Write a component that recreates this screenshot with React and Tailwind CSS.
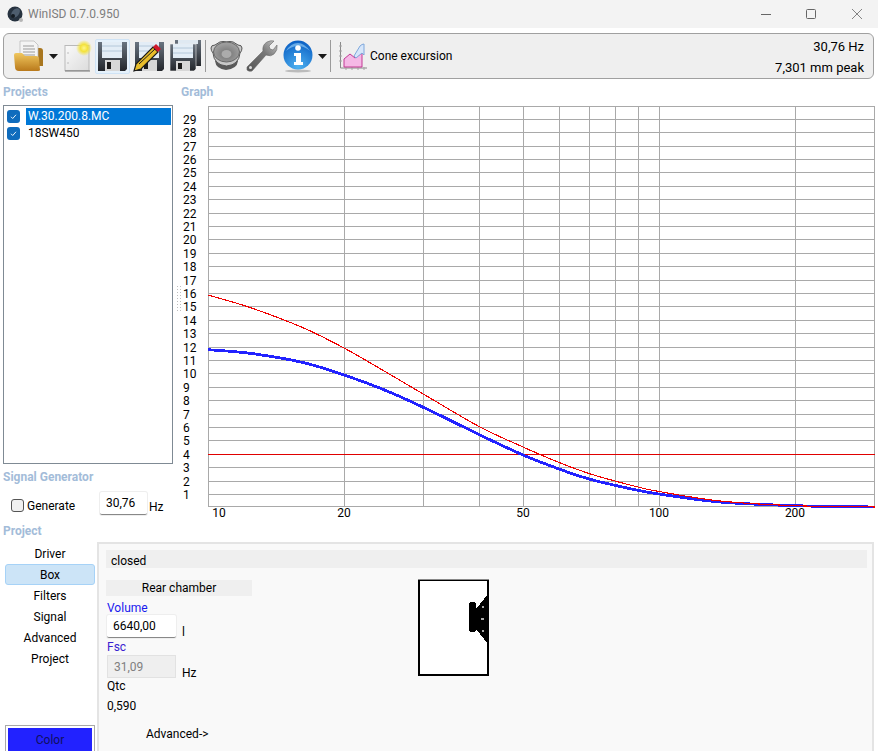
// App.jsx
import React from "react";

const gridX = [344, 423, 479, 523, 559, 589, 615, 638, 659, 795];
const ticksX = [
  { x: 219, label: "10" },
  { x: 344, label: "20" },
  { x: 523, label: "50" },
  { x: 659, label: "100" },
  { x: 795, label: "200" },
];
const values = Array.from({ length: 29 }, (_, i) => i + 1);
const rowY = (v) => Math.floor(506.8 - 13.4 * v) + 0.5;

const redPts = [[208, 294], [250, 306.5], [303, 326.7], [344, 347], [387, 371.7], [430, 397], [480, 426], [523, 446], [559, 461.5], [589, 472.5], [615, 480], [638, 486], [659, 490.5], [720, 500], [795, 504.7], [875, 506]];
const bluePts = [[208, 348.7], [250, 352.3], [303, 361.5], [344, 374], [387, 390], [430, 409.5], [480, 434], [523, 454], [559, 468], [589, 478], [615, 484.3], [638, 489.3], [659, 493], [720, 501], [795, 504.7], [875, 506]];

// catmull-rom through the read-off points
function curve(pts) {
  let d = `M${pts[0][0]} ${pts[0][1]}`;
  for (let i = 0; i < pts.length - 1; i++) {
    const p0 = pts[Math.max(i - 1, 0)];
    const p1 = pts[i];
    const p2 = pts[i + 1];
    const p3 = pts[Math.min(i + 2, pts.length - 1)];
    const c1x = p1[0] + (p2[0] - p0[0]) / 6;
    const c1y = p1[1] + (p2[1] - p0[1]) / 6;
    const c2x = p2[0] - (p3[0] - p1[0]) / 6;
    const c2y = p2[1] - (p3[1] - p1[1]) / 6;
    d += ` C${c1x} ${c1y} ${c2x} ${c2y} ${p2[0]} ${p2[1]}`;
  }
  return d;
}

function Graph() {
  return (
    <svg width="697" height="420" viewBox="181 100 697 420" className="block" fontSize="12" fill="#000">
      <rect x="208.5" y="105.5" width="666" height="400" fill="#fff" stroke="#a9a9a9" />
      {values.map((v) => (
        <line key={v} x1="208" x2="875" y1={rowY(v)} y2={rowY(v)} stroke="#a9a9a9" />
      ))}
      {gridX.map((x) => (
        <line key={x} x1={x + 0.5} x2={x + 0.5} y1="105" y2="505" stroke="#a9a9a9" />
      ))}
      <line x1="208" x2="875" y1="453.5" y2="453.5" stroke="#e00000" />
      {values.map((v) => (
        <text key={v} x="183" y={rowY(v) + 4}>{v}</text>
      ))}
      {ticksX.map((t) => (
        <text key={t.label} x={t.x} y="516" textAnchor="middle">{t.label}</text>
      ))}
      <path d={curve(bluePts)} fill="none" stroke="#2222ff" strokeWidth="2.8" shapeRendering="crispEdges" />
      <path d={curve(redPts)} fill="none" stroke="#f00000" strokeWidth="1.1" shapeRendering="crispEdges" />
    </svg>
  );
}

function Folder() {
  return (
    <svg width="33" height="32" viewBox="0 0 33 32">
      <defs>
        <linearGradient id="fo" x1="0" y1="0" x2="0" y2="1">
          <stop offset="0" stopColor="#f0c75e" />
          <stop offset="1" stopColor="#b9791b" />
        </linearGradient>
      </defs>
      <path d="M22 8 L27 8 Q30 8 30 11 L30 26 L22 26Z" fill="#a8761f" />
      <path d="M7 1 L21 1 L25 5 L25 20 L7 20Z" fill="#f4f4f4" stroke="#b5b5b5" strokeWidth="0.7" />
      <path d="M10 6h11M10 9h12M10 12h12M10 15h12" stroke="#9a9a9a" strokeWidth="1" />
      <path d="M1 15 Q1 13 3 13 L9 13 L12 16 L23 16 Q26 16 26 19 L27 30 Q27 31 25 31 L6 31 Q2 31 2 27Z" fill="url(#fo)" />
    </svg>
  );
}

function Caret() {
  return (
    <svg width="9" height="5" viewBox="0 0 9 5"><path d="M0 0h9L4.500 5z" fill="#1a1a1a" /></svg>
  );
}

function NewDoc() {
  return (
    <svg width="29" height="34" viewBox="0 0 29 34">
      <defs>
        <linearGradient id="dc" x1="0" y1="0" x2="1" y2="1">
          <stop offset="0" stopColor="#fafafa" />
          <stop offset="1" stopColor="#dcdcdc" />
        </linearGradient>
        <radialGradient id="gl">
          <stop offset="0" stopColor="#fff68a" />
          <stop offset="0.45" stopColor="#f3e23c" />
          <stop offset="1" stopColor="#f3e23c" stopOpacity="0" />
        </radialGradient>
      </defs>
      <rect x="1" y="6.500" width="24" height="25" fill="url(#dc)" stroke="#b9b9b9" />
      <path d="M1 32h25" stroke="#777" />
      <circle cx="4" cy="14" r="0.7" fill="#aaa" />
      <circle cx="4" cy="24" r="0.7" fill="#aaa" />
      <circle cx="20" cy="9" r="8" fill="url(#gl)" />
    </svg>
  );
}

function Floppy({ id = "fl" }) {
  return (
    <svg width="31" height="31" viewBox="0 0 31 31">
      <defs>
        <linearGradient id={id} x1="0" y1="0" x2="0" y2="1">
          <stop offset="0" stopColor="#6a7480" />
          <stop offset="1" stopColor="#23262b" />
        </linearGradient>
      </defs>
      <path d="M1 1h29v27l-2 2H1z" fill={`url(#${id})`} />
      <rect x="5" y="1" width="20" height="16" fill="#e3edf6" />
      <path d="M5 5h20M5 10h20" stroke="#b4c8da" />
      <rect x="8" y="19" width="15" height="11" fill="#d7d7d7" />
      <rect x="10" y="21" width="4" height="7" fill="#1c1c1c" />
    </svg>
  );
}

function PencilFloppy() {
  return (
    <div className="relative w-[31px] h-[31px]">
      <Floppy id="fl2" />
      <svg className="absolute left-[-1px] top-0" width="32" height="31" viewBox="0 0 32 31">
        <path d="M1 30 L3 23 L20 6 L25 11 L8 28Z" fill="#e8bd2a" stroke="#1a1a1a" strokeWidth="1.2" />
        <path d="M6 23 L22 8" stroke="#1a1a1a" strokeWidth="1" />
        <path d="M20 6 L23 3 L28 8 L25 11Z" fill="#d0182a" />
      </svg>
    </div>
  );
}

function DoubleFloppy() {
  return (
    <svg width="33" height="32" viewBox="0 0 33 32">
      <defs>
        <linearGradient id="fl3" x1="0" y1="0" x2="0" y2="1">
          <stop offset="0" stopColor="#6a7480" />
          <stop offset="1" stopColor="#23262b" />
        </linearGradient>
      </defs>
      <path d="M6 0h26v26H6z" fill="url(#fl3)" />
      <rect x="9" y="0" width="20" height="4" fill="#dfe9f2" />
      <path d="M1 4h26v25l-2 2H1z" fill="url(#fl3)" stroke="#f0f0f0" strokeWidth="0.6" />
      <rect x="4" y="4" width="20" height="14" fill="#e3edf6" />
      <path d="M4 8h20M4 13h20" stroke="#b4c8da" />
      <rect x="7" y="21" width="14" height="10" fill="#d7d7d7" />
      <rect x="9" y="23" width="4" height="6" fill="#1c1c1c" />
    </svg>
  );
}

function Speaker() {
  return (
    <svg width="33" height="30" viewBox="0 0 33 30">
      <defs>
        <radialGradient id="cone" cx="0.5" cy="0.6">
          <stop offset="0" stopColor="#b4b4b4" />
          <stop offset="0.35" stopColor="#808080" />
          <stop offset="1" stopColor="#9c9c9c" />
        </radialGradient>
      </defs>
      <path d="M5 20 Q6 28 16 29 Q27 28 28 20Z" fill="#5a5a5a" />
      <path d="M1 7 Q1 4 5 4 Q9 0 16.500 0 Q24 0 28 4 Q32 4 32 7 Q32 10 30 12 Q29 24 16.500 25 Q4 24 3 12 Q1 10 1 7Z" fill="#c8c8c8" stroke="#555" strokeWidth="1" />
      <ellipse cx="16.500" cy="11" rx="13" ry="10" fill="url(#cone)" stroke="#666" />
      <ellipse cx="16.500" cy="13" rx="5" ry="4" fill="#ababab" />
    </svg>
  );
}

function Wrench() {
  return (
    <svg width="32" height="32" viewBox="0 0 32 32">
      <defs>
        <linearGradient id="wr" x1="0" y1="1" x2="1" y2="0">
          <stop offset="0" stopColor="#555" />
          <stop offset="0.6" stopColor="#777" />
          <stop offset="1" stopColor="#c8c8c8" />
        </linearGradient>
      </defs>
      <path d="M1 27 L17 11 Q16 5 21 2 Q25 0 28 1 L23 6 L24 9 L27 10 L31 5 Q32 10 28 14 Q25 17 20 15 L6 31 Q3 32 1 30Z" fill="url(#wr)" stroke="#666" strokeWidth="0.6" />
      <circle cx="4.500" cy="27.500" r="1.500" fill="#ddd" />
    </svg>
  );
}

function Info() {
  return (
    <svg width="30" height="33" viewBox="0 0 30 33">
      <defs>
        <radialGradient id="inf" cx="0.5" cy="0.9" r="0.9">
          <stop offset="0" stopColor="#4fb2f0" />
          <stop offset="1" stopColor="#0a5fc4" />
        </radialGradient>
      </defs>
      <ellipse cx="15" cy="31" rx="13" ry="1.500" fill="#bbb" />
      <circle cx="15" cy="15" r="14.500" fill="url(#inf)" />
      <path d="M3 11 Q15 1 27 11 Q21 3 15 3 Q8 3 3 11Z" fill="#8cc6f2" opacity="0.7" />
      <circle cx="15" cy="8" r="2.800" fill="#fff" />
      <path d="M11 13h7v9h2v3h-9v-3h2v-6h-2z" fill="#fff" />
    </svg>
  );
}

function ChartIcon() {
  return (
    <svg width="30" height="30" viewBox="0 0 30 30">
      <path d="M2.500 1v26H29" fill="none" stroke="#8a8a8a" />
      <path d="M1 5h3M1 10h3M1 15h3M1 20h3M8 26v3M14 26v3M20 26v3M26 26v3" stroke="#a5a5a5" />
      <path d="M6 26 V18 L12 13 L17 17 L24 12 V26Z" fill="#f5b8e6" stroke="#c23a94" />
      <path d="M16 15 L22 5 Q24 3 26 3 V14 L24 12 L18 17Z" fill="#d6e6fa" stroke="#7fa8dc" />
    </svg>
  );
}

function Separator() {
  return <div className="w-px h-[32px] bg-[#9a9a9a]" />;
}

function Checked() {
  return (
    <span className="flex items-center justify-center w-[13px] h-[13px] rounded-[3px] bg-[#0f6cbd]">
      <svg width="9" height="9" viewBox="0 0 9 9"><path d="M2 4.800l1.700 1.700L7 2.800" fill="none" stroke="#fff" strokeWidth="0.9" /></svg>
    </span>
  );
}

const navItems = ["Driver", "Box", "Filters", "Signal", "Advanced", "Project"];

export default function App() {
  return (
    <div className="w-[878px] h-[751px] overflow-hidden bg-white text-black text-[12px] leading-[16px] font-['Roboto','Noto_Sans',sans-serif]">
      {/* title bar */}
      <div className="flex items-center h-7 bg-[#f3f3f3] pl-[7px]">
        <svg width="17" height="17" viewBox="0 0 17 17">
          <circle cx="8" cy="8" r="7.500" fill="#26323f" />
          <ellipse cx="8.500" cy="7" rx="3.500" ry="5.500" fill="#4d5d6e" transform="rotate(40 8.500 7)" />
          <circle cx="6" cy="10" r="2" fill="#141b22" />
          <circle cx="14" cy="14" r="2" fill="#b5b5b5" />
        </svg>
        <span className="ml-[4px] text-[#7d7d7d]">WinISD 0.7.0.950</span>
        <div className="ml-auto flex items-center">
          <svg width="10" height="10" viewBox="0 0 10 10" className="mr-[35px]"><path d="M0 5.500h10" stroke="#666" /></svg>
          <svg width="10" height="10" viewBox="0 0 10 10" className="mr-[36px]"><rect x="0.500" y="0.500" width="9" height="9" rx="1" fill="none" stroke="#666" /></svg>
          <svg width="10" height="10" viewBox="0 0 10 10" className="mr-[16px]"><path d="M0 0l10 10M10 0L0 10" stroke="#666" strokeWidth="0.8" /></svg>
        </div>
      </div>

      {/* toolbar */}
      <div className="flex items-center mx-[3px] mt-[5px] w-[871px] h-[46px] rounded-[6px] border border-[#a0a0a0] bg-[#efefef]">
        <div className="ml-[9px]"><Folder /></div>
        <div className="ml-[3px]"><Caret /></div>
        <div className="ml-[6px]"><NewDoc /></div>
        <div className="ml-[2px] flex items-center justify-center w-[35px] h-[35px] rounded-[2px] border border-[#cfe3f5] bg-[#e5f1fb]"><Floppy /></div>
        <div className="ml-[4px]"><PencilFloppy /></div>
        <div className="ml-[4px]"><DoubleFloppy /></div>
        <div className="ml-[3px]"><Separator /></div>
        <div className="ml-[4px]"><Speaker /></div>
        <div className="ml-[3px]"><Wrench /></div>
        <div className="ml-[5px]"><Info /></div>
        <div className="ml-[5px]"><Caret /></div>
        <div className="ml-[3px]"><Separator /></div>
        <div className="ml-[7px]"><ChartIcon /></div>
        <span className="ml-[2px]">Cone excursion</span>
        <div className="ml-auto mr-[9px] flex flex-col items-end gap-[5px] pt-[3px] text-[13px]">
          <span>30,76 Hz</span>
          <span>7,301 mm peak</span>
        </div>
      </div>

      {/* projects + graph */}
      <div className="flex h-[442px]">
        <div className="w-[176px] pl-[3px] shrink-0">
          <div className="pt-[5px] h-[26px] font-bold text-[#a3bcd9]">Projects</div>
          <div className="w-[170px] h-[359px] border border-[#7f8a94] bg-white pt-[2px]">
            <div className="flex items-center h-[17px] pl-[3px] gap-[6px]">
              <Checked />
              <span className="flex-1 h-[17px] pl-[2px] mr-px bg-[#0078d7] text-white">W.30.200.8.MC</span>
            </div>
            <div className="flex items-center h-[16px] pl-[3px] gap-[6px]">
              <Checked />
              <span className="pl-[2px]">18SW450</span>
            </div>
          </div>
          <div className="mt-[5px] h-[16px] font-bold text-[#a3bcd9]">Signal Generator</div>
          <div className="flex items-start mt-[7px] pl-[8px]">
            <span className="mt-[7px] w-[13px] h-[13px] rounded-[3px] border border-[#555] bg-[#f0f0f0]" />
            <span className="mt-[6px] ml-[3px] w-[73px]">Generate</span>
            <span className="flex items-center w-[47px] h-[23px] pl-[6px] mr-px bg-white border-b border-[#888] shadow-[0_0_0_1px_#eeeeee] rounded-[2px]">30,76</span>
            <span className="ml-px mt-[7px]">Hz</span>
          </div>
        </div>
        <div className="relative flex-1">
          <div className="pt-[5px] pl-[5px] h-[22px] font-bold text-[#a3bcd9]">Graph</div>
          <div className="ml-[5px]"><Graph /></div>
          {/* splitter grip */}
          <div className="absolute left-0 top-[206px] w-[6px] h-[28px] bg-[radial-gradient(#bdbdbd_1px,transparent_1px)] bg-[length:3px_3px]" />
        </div>
      </div>

      <div className="pl-[3px] pt-[2px] h-[21px] font-bold text-[#a3bcd9]">Project</div>

      {/* project panel */}
      <div className="flex h-[209px]">
        <div className="w-[97px] shrink-0 pl-[5px] flex flex-col">
          <div className="flex flex-col pt-[1px]">
            {navItems.map((n) => (
              <div
                key={n}
                className={
                  n === "Box"
                    ? "flex items-center justify-center w-[90px] h-[21px] rounded-[3px] border border-[#a6d2f7] bg-[#cce4f7]"
                    : "flex items-center justify-center w-[90px] h-[21px]"
                }
              >
                {n}
              </div>
            ))}
          </div>
          <div className="mt-auto w-[90px] h-[26px] p-[2px] border border-[#a9a9a9] border-b-0">
            <div className="flex items-center justify-center h-[24px] bg-[#2222ff] text-[#101060]">Color</div>
          </div>
        </div>
        <div className="w-[777px] border-t-2 border-l-2 border-r-2 border-[#e4e4e4] bg-[#f9f9f9] pl-[7px] pr-[5px] pt-[6px]">
          <div className="flex items-center h-[18px] bg-[#efefef] pl-[5px] pt-[3px]">closed</div>
          <div className="flex mt-[12px]">
            <div className="w-[146px] shrink-0">
              <div className="flex items-center justify-center h-[16px] bg-[#efefef]">Rear chamber</div>
              <div className="pl-px mt-[4px] h-[15px] text-[#1a1aee]">Volume</div>
              <div className="flex pl-px">
                <span className="flex items-center w-[69px] h-[23px] pl-[6px] bg-white border-b border-[#888] shadow-[0_0_0_1px_#eeeeee] rounded-[2px]">6640,00</span>
                <span className="ml-[6px] pt-[9px]">l</span>
              </div>
              <div className="pl-px -mt-px h-[16px] leading-[16px] text-[#3a1fd0]">Fsc</div>
              <div className="flex pl-px h-[23px]">
                <span className="flex items-center w-[69px] h-[23px] pl-[6px] bg-[#efefef] border border-[#e2e2e2] text-[#808080]">31,09</span>
                <span className="ml-[6px] h-[23px] pt-[10px]">Hz</span>
              </div>
              <div className="pl-px">Qtc</div>
              <div className="pl-px mt-[4px]">0,590</div>
              <div className="pl-[40px] mt-[12px]">Advanced-&gt;</div>
            </div>
            <div className="ml-[166px] -mt-px">
              <svg width="71" height="97" viewBox="0 0 71 97" className="block" shapeRendering="crispEdges">
                <rect x="1" y="1" width="69" height="95" fill="#fff" stroke="#000" strokeWidth="2" />
                <path d="M0 0h71" stroke="#888" strokeWidth="1" />
                <rect x="51" y="23" width="7" height="30" rx="3" fill="#000" />
                <path d="M58 30 L70 15 V65 L58 50Z" fill="#000" />
                <path d="M64 28h2M63 40h3M64 52h2" stroke="#aaa" strokeWidth="1.500" />
              </svg>
            </div>
          </div>
        </div>
      </div>
    </div>
  );
}
